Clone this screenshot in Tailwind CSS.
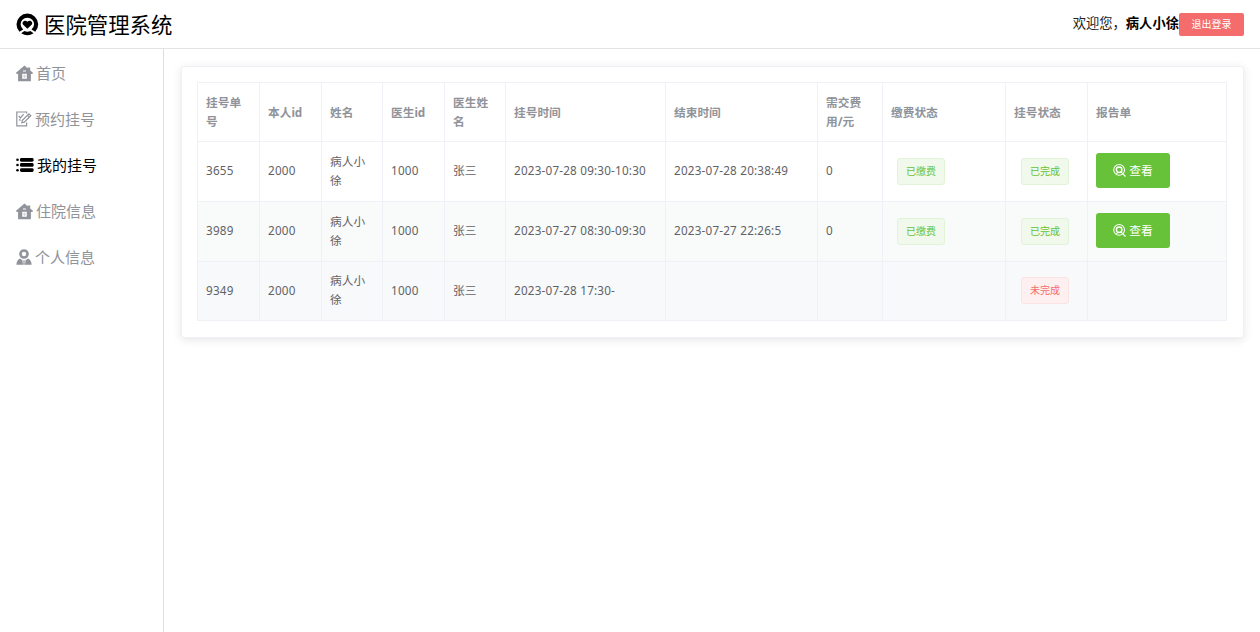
<!DOCTYPE html>
<html lang="zh-CN">
<head>
  <meta charset="UTF-8" />
  <meta name="viewport" content="width=device-width, initial-scale=1.0" />
  <title>医院管理系统</title>
  <script src="https://cdn.jsdelivr.net/npm/@tailwindcss/browser@4"></script>
</head>
<body class="bg-white font-['Noto_Sans','Noto_Sans_CJK_SC',sans-serif] h-screen flex flex-col overflow-hidden">
  <!-- shared icons -->
  <svg class="hidden">
    <symbol id="icon-house" viewBox="0 0 17 17">
      <path fill="currentColor" fill-rule="evenodd" d="M8.5.6 11.6 3.2V2.4H14.2V5.4L17 7.8 16.3 9H14.9V16.2H2.1V9H.7L0 7.8Z M7 5.6V6.5H10V5.6Z M6.2 8.8V13.8H10.8V8.8Z" />
      <path fill="currentColor" d="M7.9 9.4h1.2v1.2h1v1.2h-1v1.2H7.9v-1.2h-1v-1.2h1Z" opacity=".35" />
    </symbol>
    <symbol id="icon-view" viewBox="0 0 14 14">
      <g fill="none" stroke="currentColor" stroke-linecap="round">
        <circle cx="6.6" cy="6.4" r="5.8" stroke-width="1.1" />
        <circle cx="6.6" cy="6.2" r="3" stroke-width="1.5" />
        <path d="M9 9 13.2 13.2M5.1 9.1 4 10.4" stroke-width="1.2" />
      </g>
    </symbol>
  </svg>

  <header class="h-[49px] shrink-0 border-b border-[#e2e3e6] pl-4 pr-4 flex items-center justify-between">
    <div class="flex items-center text-black">
      <svg class="w-[23px] h-[23px] mr-[5px] mt-px" viewBox="0 0 23 23">
        <path fill="currentColor" d="M3.4 18.7A10.8 10.8 0 1 1 19.3 18.7L15.5 16.6A6.7 6.7 0 1 0 7.2 16.6Z" />
        <path fill="currentColor" d="M11.4 15.8 7.2 11.8C5 9.4 8.9 6 11.4 8.8 13.9 6 17.8 9.4 15.6 11.8Z" />
        <path fill="currentColor" d="M5.2 20.3 8.4 17.9Q11.4 19.4 14.4 17.9L17.6 20.3Q11.4 24.2 5.2 20.3Z" />
      </svg>
      <h1 class="text-[21.4px] leading-8 font-normal mt-0.5">医院管理系统</h1>
    </div>
    <div class="flex items-center text-[13.3px] text-black">
      <span class="text-[#222]">欢迎您，</span><b>病人小徐</b>
      <button class="w-[65px] h-[23px] bg-[#f56c6c] text-white text-[10px] rounded-[2px]">退出登录</button>
    </div>
  </header>

  <div class="flex flex-1 min-h-0">
    <nav class="w-[164px] shrink-0 border-r border-[#dddee1] pl-4 pt-[1px] text-[15px] text-[#909399]">
      <a class="flex items-center h-[46px]">
        <svg class="w-[17px] h-[17px] mr-[3px]"><use href="#icon-house" /></svg>首页
      </a>
      <a class="flex items-center h-[46px]">
        <svg class="w-4 h-4 mr-[3px]" viewBox="0 0 16 16" fill="none" stroke="currentColor" stroke-width="1.2">
          <path d="M10.6 2.6V1H.8V14.8H10.6V11.6" />
          <path d="M5.8 11.8 6.4 9.4 12.9 2.8 14.8 4.7 8.3 11.2Z" />
          <path d="M2.8 4.8 4.4 7 7.6 3.2M3 8.6 4.6 9.4M11.4 4.2 13.4 6.2" />
        </svg>预约挂号
      </a>
      <a class="flex items-center h-[46px] text-black">
        <svg class="w-[18px] h-4 mr-[3px]" viewBox="0 0 18 16" fill="currentColor">
          <circle cx="1.5" cy="2.7" r="1.3" /><circle cx="1.5" cy="8" r="1.3" /><circle cx="1.5" cy="13.3" r="1.3" />
          <rect x="4" y="1" width="13.6" height="3.7" rx="1.4" />
          <rect x="4" y="6.1" width="13.6" height="3.7" rx="1.4" />
          <rect x="4" y="11.2" width="13.6" height="3.7" rx="1.4" />
        </svg>我的挂号
      </a>
      <a class="flex items-center h-[46px]">
        <svg class="w-[17px] h-[17px] mr-[3px]"><use href="#icon-house" /></svg>住院信息
      </a>
      <a class="flex items-center h-[46px]">
        <svg class="w-4 h-4 mr-[3px]" viewBox="0 0 16 16" fill="currentColor">
          <path fill-rule="evenodd" d="M8 .2A4.8 4.8 0 1 1 8 9.8 4.8 4.8 0 0 1 8 .2ZM8 2.8A2.2 2.2 0 1 0 8 7.2 2.2 2.2 0 0 0 8 2.8Z" />
          <path d="M4 9.6Q5.6 11 6.4 11L7 15.8H.4Q.4 11.4 4 9.6ZM12 9.6Q10.4 11 9.6 11L9 15.8H15.6Q15.6 11.4 12 9.6ZM7 11.4H9L8.5 12.8 8.8 15.8H7.2L7.5 12.8Z" />
        </svg>个人信息
      </a>
    </nav>

    <main class="flex-1 pt-[17px] pl-[17px] pr-4">
      <div class="h-[272px] rounded-[3px] border border-[#f0f1f6] bg-white shadow-[0_2px_10px_rgba(0,0,0,0.1)] pt-[15px] pl-[15px]">
        <table class="table-fixed border-collapse w-[1030px] text-[11.7px] leading-[19px] text-[#606266] text-left [&_td]:border [&_th]:border [&_td]:border-[#eff1f6] [&_th]:border-[#eff1f6] [&_td]:px-2 [&_th]:px-2 [&_td]:pt-0 [&_td]:pb-0.5 [&_th]:py-0">
          <colgroup>
            <col class="w-[62px]" /><col class="w-[62px]" /><col class="w-[61px]" /><col class="w-[62px]" />
            <col class="w-[61px]" /><col class="w-[160px]" /><col class="w-[152px]" /><col class="w-[65px]" />
            <col class="w-[123px]" /><col class="w-[82px]" /><col class="w-[139px]" />
          </colgroup>
          <thead>
            <tr class="h-[59px] text-[#909399]">
              <th>挂号单号</th><th>本人id</th><th>姓名</th><th>医生id</th><th>医生姓名</th><th>挂号时间</th>
              <th>结束时间</th><th>需交费用/元</th><th>缴费状态</th><th>挂号状态</th><th>报告单</th>
            </tr>
          </thead>
          <tbody>
            <tr class="h-[60px]">
              <td class="tracking-[0.2px]">3655</td><td class="tracking-[0.2px]">2000</td><td>病人小徐</td><td class="tracking-[0.2px]">1000</td><td>张三</td>
              <td class="tracking-[0.2px]">2023-07-28 09:30-10:30</td><td class="tracking-[0.2px]">2023-07-28 20:38:49</td><td>0</td>
              <td><span class="ml-1.5 mt-0.5 w-12 h-[27px] flex items-center justify-center rounded-[3px] border border-[#e1f3d8] bg-[#f0f9eb] text-[#67c23a] text-[10px]">已缴费</span></td>
              <td><span class="ml-[7px] mt-0.5 w-12 h-[27px] flex items-center justify-center rounded-[3px] border border-[#e1f3d8] bg-[#f0f9eb] text-[#67c23a] text-[10px]">已完成</span></td>
              <td><button class="w-[74px] h-[35px] flex items-center justify-center gap-[3px] rounded-[3px] bg-[#67c23a] text-white"><svg class="w-[13px] h-[13px]"><use href="#icon-view" /></svg>查看</button></td>
            </tr>
            <tr class="h-[60px] bg-[#f9fbfa]">
              <td class="tracking-[0.2px]">3989</td><td class="tracking-[0.2px]">2000</td><td>病人小徐</td><td class="tracking-[0.2px]">1000</td><td>张三</td>
              <td class="tracking-[0.2px]">2023-07-27 08:30-09:30</td><td class="tracking-[0.2px]">2023-07-27 22:26:5</td><td>0</td>
              <td><span class="ml-1.5 mt-0.5 w-12 h-[27px] flex items-center justify-center rounded-[3px] border border-[#e1f3d8] bg-[#f0f9eb] text-[#67c23a] text-[10px]">已缴费</span></td>
              <td><span class="ml-[7px] mt-0.5 w-12 h-[27px] flex items-center justify-center rounded-[3px] border border-[#e1f3d8] bg-[#f0f9eb] text-[#67c23a] text-[10px]">已完成</span></td>
              <td><button class="w-[74px] h-[35px] flex items-center justify-center gap-[3px] rounded-[3px] bg-[#67c23a] text-white"><svg class="w-[13px] h-[13px]"><use href="#icon-view" /></svg>查看</button></td>
            </tr>
            <tr class="h-[59px] bg-[#f7f9fb]">
              <td class="tracking-[0.2px]">9349</td><td class="tracking-[0.2px]">2000</td><td>病人小徐</td><td class="tracking-[0.2px]">1000</td><td>张三</td>
              <td class="tracking-[0.2px]">2023-07-28 17:30-</td><td></td><td></td><td></td>
              <td><span class="ml-[7px] w-12 h-[27px] flex items-center justify-center rounded-[3px] border border-[#fde2e2] bg-[#fef0f0] text-[#f56c6c] text-[10px]">未完成</span></td>
              <td></td>
            </tr>
          </tbody>
        </table>
      </div>
    </main>
  </div>
</body>
</html>
